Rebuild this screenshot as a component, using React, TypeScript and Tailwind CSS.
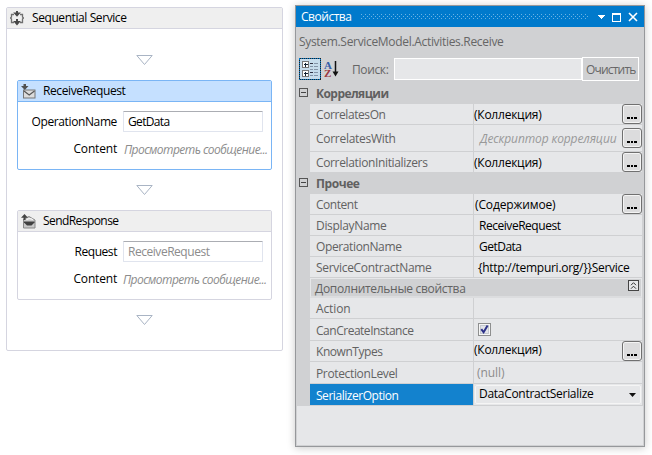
import { useLayoutEffect, useRef, useState } from "react";
import type { ReactNode } from "react";

/** One line of text whose tracking is adjusted so that it spans `w` pixels. */
function Txt({ children, w, className = "" }: { children: string; w: number; className?: string }) {
  const ref = useRef<HTMLSpanElement>(null);
  const [tracking, setTracking] = useState(0);
  useLayoutEffect(() => {
    const el = ref.current;
    if (!el) return;
    el.style.letterSpacing = "0px";
    const natural = el.getBoundingClientRect().width;
    setTracking((w + 0.5 - natural) / children.length);
  }, [w, children]);
  return (
    <span ref={ref} className={`inline-block shrink-0 whitespace-pre leading-4 ${className}`} style={{ letterSpacing: `${tracking}px` }}>
      {children}
    </span>
  );
}

function Arrow() {
  return (
    <svg width="17" height="11" viewBox="0 0 17 11" className="mx-auto block shrink-0">
      <path d="M0.8 0.5H16.2L8.5 9.5Z" fill="#fff" stroke="#a9b4c4" />
    </svg>
  );
}

function SequenceIcon() {
  return (
    <svg width="14" height="16" viewBox="0 0 14 16">
      <path d="M4 4.5H1.5V7L0.5 8L1.5 9V12.5H4M10 4.5H12.5V7L13.5 8L12.5 9V12.5H10" fill="none" stroke="#707070" strokeWidth="1.3" />
      <path d="M6 1H8V2.500H10.800L7 6.800L3.200 2.500H6ZM6 9H8V11H10.800L7 15.500L3.200 11H6Z" fill="#484848" />
    </svg>
  );
}

function ReceiveIcon() {
  return (
    <svg width="15" height="15" viewBox="0 0 15 15">
      <rect x="2.500" y="6" width="11.500" height="8" fill="#dcdcdc" stroke="#777" />
      <path d="M3 7L8.200 11L13.500 7" fill="none" stroke="#555" strokeWidth="1.200" />
      <path d="M2.500 0H5V2H7.500L3.800 6L0 2H2.500Z" fill="#505050" />
    </svg>
  );
}

function SendIcon() {
  return (
    <svg width="15" height="15" viewBox="0 0 15 15">
      <path d="M2.500 5L8 2.500L14 6V14H2.500Z" fill="#c8c8c8" stroke="#888" />
      <path d="M3 7.500H13.500V8.500L10.500 11.500H6L3 8.500Z" fill="#404040" />
      <path d="M5.500 5.800Q8.500 3.300 12 5.800" fill="none" stroke="#f4f4f4" strokeWidth="1.300" />
      <path d="M2.600 6V3.800H0L3.500 0L7 3.800H4.500V6Z" fill="#444" />
    </svg>
  );
}

function ActivityCard({ title, icon, selected = false, field, content, fieldOffset }: {
  title: ReactNode; icon: ReactNode; selected?: boolean; field: ReactNode; content: string; fieldOffset: string;
}) {
  return (
    <div className={`h-[90px] w-[255px] rounded-[2px] border bg-white ${selected ? "border-[#7ab5f5]" : "border-[#d5d5e0]"}`}>
      <div className={`flex h-[21px] items-center border-b pl-[3px] ${selected ? "border-[#7ab5f5] bg-[#c5e0ff]" : "border-[#d5d5e0] bg-[#efefef]"}`}>
        <span className="flex w-[22px] shrink-0 pt-px">{icon}</span>
        {title}
      </div>
      <div className="grid grid-cols-[99px_1fr] pt-[9px]">
        {field}
        <div className="mt-[9px] flex justify-end"><Txt w={43}>Content</Txt></div>
        <div className={`mt-[9px] text-[#8c8c8c] ${fieldOffset}`}><Txt w={143} className="italic">{content}</Txt></div>
      </div>
    </div>
  );
}

function FieldRow({ label, lw, value, vw, muted = false }: { label: string; lw: number; value: string; vw: number; muted?: boolean }) {
  return (
    <>
      <div className="flex h-[21px] items-center justify-end"><Txt w={lw}>{label}</Txt></div>
      <div className={`ml-[6px] flex h-[21px] w-[140px] items-center rounded-[1px] border border-[#e0e4ee] border-t-[#abadb3] pl-1 ${muted ? "text-[#8c8c8c]" : ""}`}>
        <Txt w={vw}>{value}</Txt>
      </div>
    </>
  );
}

function Workflow() {
  return (
    <section className="ml-[6px] mt-[7px] h-[344px] w-[277px] shrink-0 rounded-[2px] border border-[#d5d5e0] bg-white">
      <header className="flex h-[21px] items-center border-b border-[#d5d5e0] bg-[#efefef] pl-[3px]">
        <span className="flex w-[22px] shrink-0"><SequenceIcon /></span>
        <Txt w={94} className="mb-px">Sequential Service</Txt>
      </header>
      <div className="flex flex-col pl-[10px] pr-[10px] pt-[26px]">
        <Arrow />
        <div className="mt-[14px]">
          <ActivityCard
            selected
            icon={<ReceiveIcon />}
            title={<Txt w={82}>ReceiveRequest</Txt>}
            field={<FieldRow label="OperationName" lw={85} value="GetData" vw={41} />}
            content="Просмотреть сообщение..."
            fieldOffset="pl-[7px]"
          />
        </div>
        <div className="mt-[15px]"><Arrow /></div>
        <div className="mt-[14px]">
          <ActivityCard
            icon={<SendIcon />}
            title={<Txt w={75}>SendResponse</Txt>}
            field={<FieldRow label="Request" lw={42} value="ReceiveRequest" vw={81} muted />}
            content="Просмотреть сообщение..."
            fieldOffset="pl-[6px]"
          />
        </div>
        <div className="mt-[15px]"><Arrow /></div>
      </div>
    </section>
  );
}

function MoreButton() {
  return (
    <button className="ml-auto flex h-5 w-5 shrink-0 items-end justify-center gap-px rounded-[3px] border border-[#707070] bg-[#dcdcdd] pb-[4px] shadow-[inset_0_0_0_1px_#f4f4f4]">
      <i className="h-[2px] w-[2.5px] bg-black" /><i className="h-[2px] w-[2.5px] bg-black" /><i className="h-[2px] w-[2.5px] bg-black" />
    </button>
  );
}

function Category({ name, w, className }: { name: string; w: number; className: string }) {
  return (
    <div className={`flex items-center pl-[3px] ${className}`}>
      <span className="mb-px flex h-[9px] w-[9px] items-center justify-center border border-[#555]">
        <i className="h-px w-[5px] bg-[#444]" />
      </span>
      <Txt w={w} className="ml-[8px] mt-px font-bold text-[#606060]">{name}</Txt>
    </div>
  );
}

function Row({ label, lw, h = "h-[21px]", children, selected = false, last = false }: {
  label: string; lw: number; h?: string; children?: ReactNode; selected?: boolean; last?: boolean;
}) {
  return (
    <div className={`ml-[14px] mr-[2px] flex bg-[#e6e7e9] ${last ? "" : "border-b border-[#cfd0d2]"} ${h}`}>
      <div className={`flex w-[163px] shrink-0 items-center pl-[6px] pt-[2px] ${selected ? "bg-[#1382ce] text-white" : "text-[#626262]"}`}>
        <Txt w={lw}>{label}</Txt>
      </div>
      <div className="flex min-w-0 flex-1 items-center border-l border-[#cfd0d2]">{children}</div>
    </div>
  );
}

function TitleBar() {
  return (
    <header className="flex h-[21px] shrink-0 items-center bg-[#007acc] pl-[5px] text-white">
      <Txt w={50}>Свойства</Txt>
      <svg width="228" height="5" className="ml-[9px]">
        <defs>
          <pattern id="grip" width="4" height="4" patternUnits="userSpaceOnUse">
            <rect width="1" height="1" fill="#6bb3e4" />
            <rect x="2" y="2" width="1" height="1" fill="#6bb3e4" />
          </pattern>
        </defs>
        <rect width="228" height="5" fill="url(#grip)" shapeRendering="crispEdges" />
      </svg>
      <svg width="44" height="10" className="ml-[8px]" fill="none" shapeRendering="crispEdges">
        <path d="M0 3H8L4 7Z" fill="#fff" />
        <path d="M15.500 1.500H23.500V9.500H15.500Z" stroke="#fff" />
        <path d="M15 2.500H24" stroke="#fff" />
        <path d="M32 1L40 9M40 1L32 9" stroke="#fff" strokeWidth="1.600" shapeRendering="auto" />
      </svg>
    </header>
  );
}

function Toolbar() {
  return (
    <div className="mt-[7px] flex h-[24px] items-center pl-[3px]">
      <svg width="22" height="22" viewBox="0 0 22 22" className="shrink-0" shapeRendering="crispEdges">
        <rect x="0.500" y="0.500" width="21" height="21" fill="#c7dcec" stroke="#007acc" />
        <rect x="0.500" y="0.500" width="21" height="21" fill="none" stroke="#222" strokeDasharray="1 1" />
        <g fill="#fff" stroke="#777">
          <rect x="3.500" y="3.500" width="6" height="6" /><rect x="3.500" y="12.500" width="6" height="6" />
        </g>
        <path d="M5 6.500H9M6.500 5V9M5 15.500H9M6.500 14V18" stroke="#123" />
        <path d="M11 5.500H14M11 14.500H14" stroke="#334" />
        <path d="M15 5.500H19M11 8.500H14M15 8.500H19M11 11.500H14M15 11.500H19M15 14.500H19M11 17.500H14M15 17.500H19" stroke="#8494a8" />
      </svg>
      <div className="ml-[3px] flex w-[16px] shrink-0">
        <div className="flex w-[8px] flex-col font-['Liberation_Serif',serif] text-[11px] font-bold leading-[8px]">
          <span className="text-[#355da9]">A</span>
          <span className="text-[#9c3940]">Z</span>
        </div>
        <svg width="7" height="16" viewBox="0 0 7 16">
          <path d="M3.500 0V13" stroke="#111" strokeWidth="1.500" />
          <path d="M0.500 10.500L3.500 15.500L6.500 10.500Z" fill="#111" />
        </svg>
      </div>
      <Txt w={36} className="ml-[12px] mt-[2px] text-[#666]">Поиск:</Txt>
      <div className="ml-auto h-[22px] w-[188px] shrink-0 border border-white bg-[#e6e7e9]" />
      <button className="mr-[5px] flex h-[24px] w-[57px] shrink-0 items-center border border-white pl-[3px] pt-[2px] text-[#666]">
        <Txt w={49}>Очистить</Txt>
      </button>
    </div>
  );
}

function Properties() {
  return (
    <section className="ml-[12px] mt-[5px] flex h-[442px] w-[350px] shrink-0 flex-col border border-[#96989b] bg-[#d0d1d3] shadow-[0_1px_8px_rgba(0,0,0,0.22)]">
      <TitleBar />
      <div className="flex h-[23px] items-end pl-[3px] text-[#666]">
        <Txt w={204}>System.ServiceModel.Activities.Receive</Txt>
      </div>
      <Toolbar />
      <Category name="Корреляции" w={72} className="h-[23px] pt-[1px]" />
      <Row label="CorrelatesOn" lw={69}><Txt w={67} className="mt-[2px]">(Коллекция)</Txt><MoreButton /></Row>
      <Row label="CorrelatesWith" lw={79} h="h-[27px]">
        <Txt w={136} className="ml-[6px] mt-[2px] italic text-[#999]">Дескриптор корреляции</Txt><MoreButton />
      </Row>
      <Row label="CorrelationInitializers" lw={111} h="h-[20px]" last><Txt w={67} className="mt-[2px]">(Коллекция)</Txt><MoreButton /></Row>
      <Category name="Прочее" w={43} className="h-[22px]" />
      <Row label="Content" lw={41}><Txt w={80} className="ml-px mt-[2px]">(Содержимое)</Txt><MoreButton /></Row>
      <Row label="DisplayName" lw={70}><Txt w={81} className="ml-[5px] mt-[2px]">ReceiveRequest</Txt></Row>
      <Row label="OperationName" lw={85}><Txt w={42} className="ml-[5px] mt-[2px]">GetData</Txt></Row>
      <Row label="ServiceContractName" lw={115}><Txt w={151} className="ml-[4px] mt-[2px]">{"{http://tempuri.org/}}Service"}</Txt></Row>
      <div className="ml-[14px] mr-[2px] flex h-[20px] items-center justify-between border border-b-2 border-[#e6e7e9] border-b-[#dcdddf] pl-[4px] pr-[2px] text-[#626262]">
        <Txt w={150} className="mt-[2px]">Дополнительные свойства</Txt>
        <svg width="11" height="11" viewBox="0 0 11 11" className="mb-[5px]">
          <rect x="0.500" y="0.500" width="10" height="10" fill="#e6e7e9" stroke="#444" />
          <path d="M3 5.200L5.500 2.700L8 5.200M3 8.700L5.500 6.200L8 8.700" fill="none" stroke="#333" />
        </svg>
      </div>
      <Row label="Action" lw={34} />
      <Row label="CanCreateInstance" lw={97} h="h-[22px]">
        <svg width="13" height="13" viewBox="0 0 13 13" className="ml-[4px]">
          <rect x="0.500" y="0.500" width="12" height="12" fill="#f6f6f6" stroke="#8e8f8f" />
          <rect x="2.500" y="2.500" width="8" height="8" fill="#e2e4e9" stroke="#c5c9d0" />
          <path d="M3.300 6.200L5.600 9.300L9.600 2.600" fill="none" stroke="#2c3188" strokeWidth="2" />
        </svg>
      </Row>
      <Row label="KnownTypes" lw={66}><Txt w={67} className="mb-[2px]">(Коллекция)</Txt><MoreButton /></Row>
      <Row label="ProtectionLevel" lw={81} h="h-[22px]"><Txt w={27} className="ml-[3px] mt-px text-[#8c8c8c]">(null)</Txt></Row>
      <Row label="SerializerOption" lw={82} h="h-[22px]" selected>
        <div className="ml-px mr-px flex h-[19px] flex-1 items-center justify-between rounded-[2px] border border-[#f5f5f5] pl-[3px] pr-[4px]">
          <Txt w={114} className="mb-[2px]">DataContractSerialize</Txt>
          <svg width="7" height="4"><path d="M0 0H7L3.500 4Z" fill="#111" /></svg>
        </div>
      </Row>
      <div className="mx-px mb-px flex-1 bg-[#e6e7e9]" />
    </section>
  );
}

export default function App() {
  return (
    <main className="flex h-[455px] w-[652px] items-start overflow-hidden bg-white font-['Open_Sans','Noto_Sans',sans-serif] text-[12px] text-black">
      <Workflow />
      <Properties />
    </main>
  );
}
